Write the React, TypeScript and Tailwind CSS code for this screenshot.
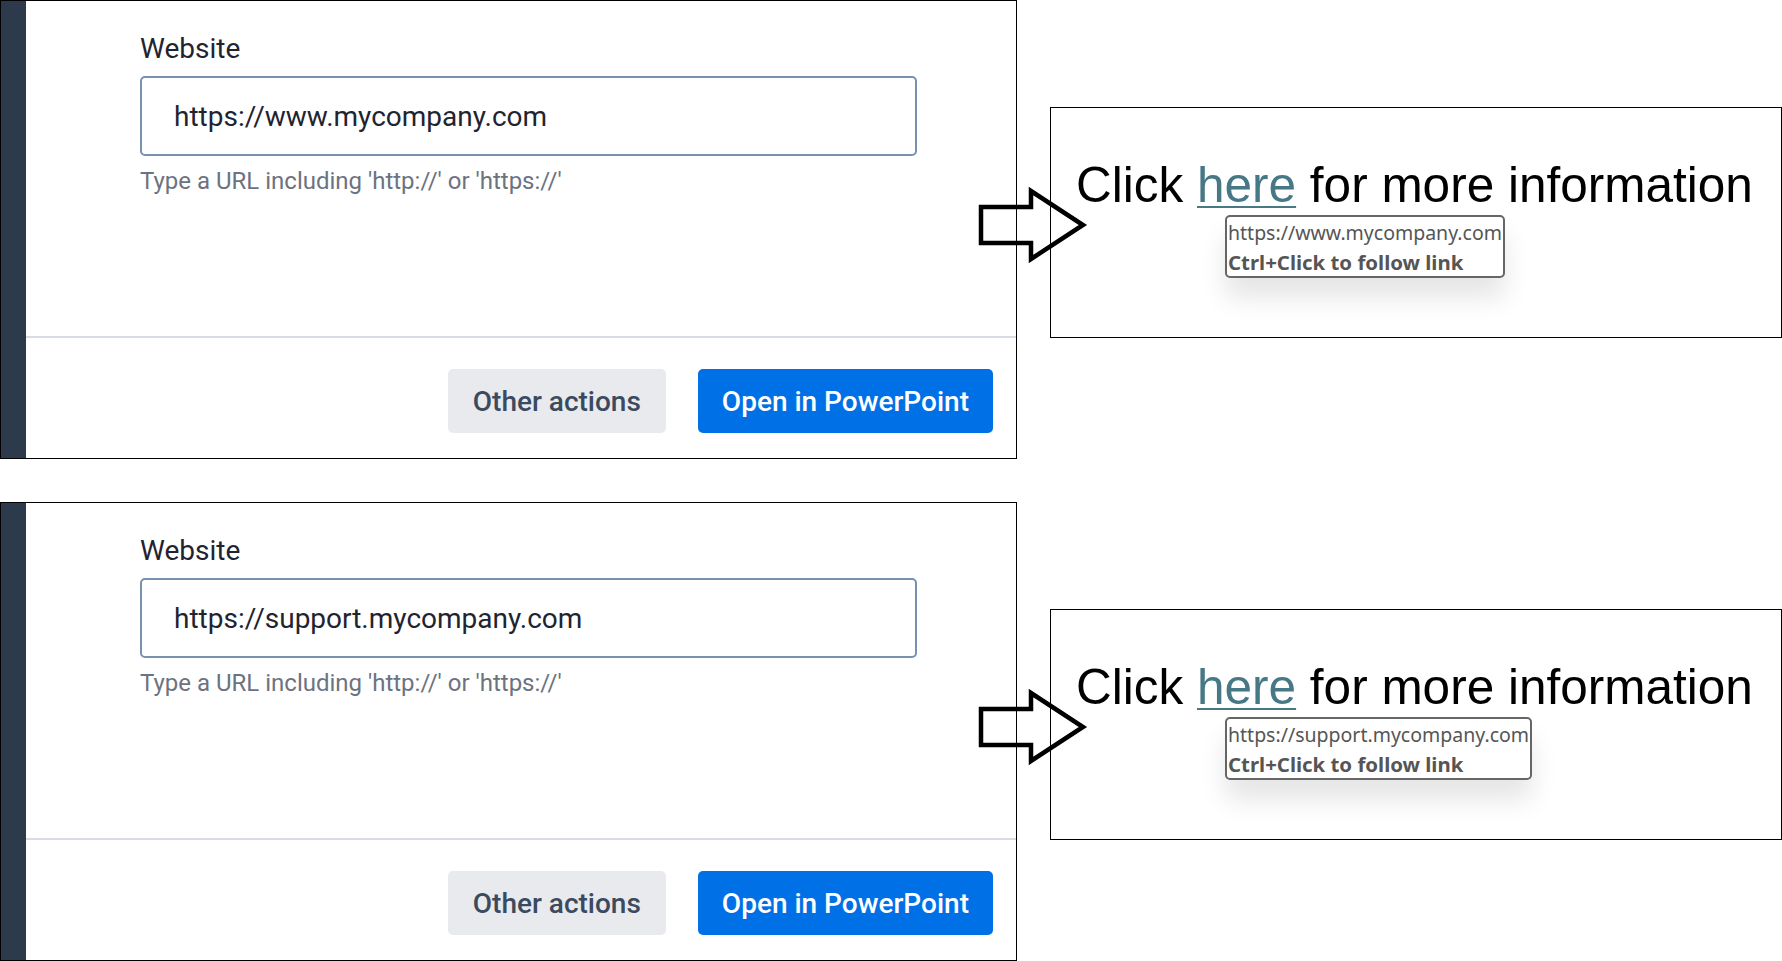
import React from "react";

function Arrow() {
  return (
    <svg
      className="absolute left-[976px] top-[185px]"
      width="112"
      height="80"
      viewBox="0 0 112 80"
    >
      <path
        d="M5 22 H55 V6 L107 40 L55 74 V58 H5 Z"
        fill="none"
        stroke="#000"
        strokeWidth="4.5"
        strokeLinejoin="miter"
      />
    </svg>
  );
}

function Panel({ url }: { url: string }) {
  return (
    <div
      className="flex w-[1017px] h-[459px] border border-black bg-white shrink-0"
      style={{ fontFamily: "Roboto, 'Noto Sans', sans-serif" }}
    >
      <div className="w-[25px] bg-[#2c3a4c] shrink-0" />
      <div className="flex flex-1 flex-col">
        <div className="h-[335px] pl-[114px] pt-[32px]">
          <div className="text-[28px] leading-[32px] text-[#1f2430]">Website</div>
          <div className="mt-[11px] flex h-[80px] w-[777px] items-center rounded-[5px] border-2 border-[#7891b0] pl-[32px] pt-[2px] text-[28px] text-[#1f2430]">
            {url}
          </div>
          <div className="mt-[11px] text-[24px] leading-[28px] text-[#6c7380]">
            Type a URL including 'http://' or 'https://'
          </div>
        </div>
        <div className="h-[2px] bg-[#d6dbe5]" />
        <div className="flex flex-1 items-start justify-end gap-[32px] pr-[23px] pt-[31px]">
          <div className="flex h-[64px] items-center rounded-[5px] bg-[#e8eaed] px-[25px] pt-[1px] text-[28px] font-medium text-[#3b4a5e]">
            Other actions
          </div>
          <div className="flex h-[64px] items-center rounded-[5px] bg-[#0070e6] px-[24px] pt-[1px] text-[28px] font-medium text-white">
            Open in PowerPoint
          </div>
        </div>
      </div>
    </div>
  );
}

function Slide({ url }: { url: string }) {
  return (
    <div className="ml-[33px] mt-[107px] h-[231px] w-[732px] shrink-0 border border-black bg-white pl-[25px] pt-[49px]">
      <div
        className="whitespace-nowrap text-[49.5px] leading-[56px] text-black"
        style={{ fontFamily: "'Liberation Sans', Arial, sans-serif" }}
      >
        Click{" "}
        <span className="text-[#467886] underline decoration-[1.5px] underline-offset-[4px]">
          here
        </span>{" "}
        for more information
      </div>
      <div
        className="ml-[149px] mt-[2px] h-[63px] w-fit rounded-[5px] border-2 border-[#666666] bg-white pl-[1px] pr-[1px] pt-[1px] text-[#555555] shadow-[0_20px_26px_rgba(0,0,0,0.10)]"
        style={{ fontFamily: "'Noto Sans', 'Open Sans', sans-serif" }}
      >
        <div className="whitespace-nowrap text-[19.5px] leading-[30px]">{url}</div>
        <div className="whitespace-nowrap text-[20.4px] font-bold leading-[28px]">Ctrl+Click to follow link</div>
      </div>
    </div>
  );
}

function Row({ url }: { url: string }) {
  return (
    <div className="relative flex h-[459px] w-[1782px] overflow-hidden">
      <Panel url={url} />
      <Slide url={url} />
      <Arrow />
    </div>
  );
}

export default function App() {
  return (
    <div className="flex h-[961px] w-[1782px] flex-col gap-[43px] overflow-hidden bg-white">
      <Row url="https://www.mycompany.com" />
      <Row url="https://support.mycompany.com" />
    </div>
  );
}
